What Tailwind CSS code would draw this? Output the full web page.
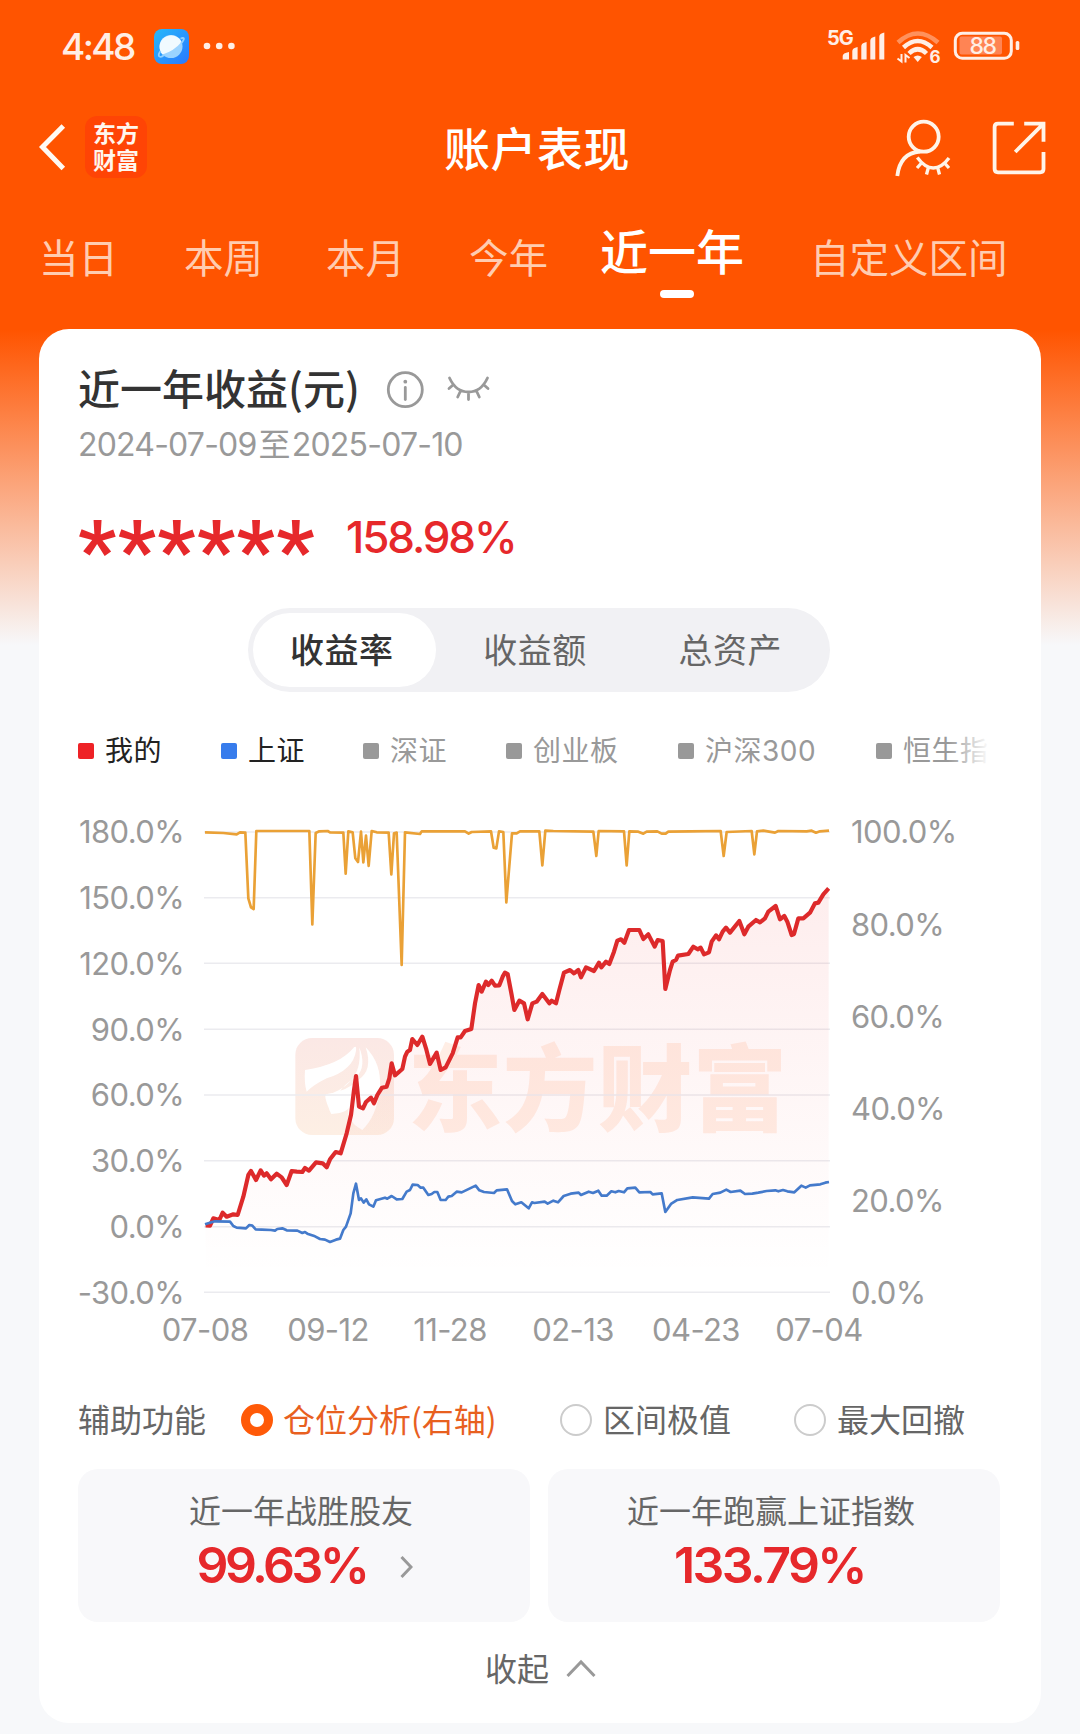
<!DOCTYPE html>
<html lang="zh-CN">
<head>
  <meta charset="UTF-8">
  <meta name="viewport" content="width=device-width, initial-scale=1.0">
  <title>账户表现</title>
  <script src="https://cdn.jsdelivr.net/npm/@tailwindcss/browser@4"></script>
</head>
<body class="w-[1080px] h-[1734px] overflow-hidden bg-[#f7f8fa] font-['Inter','Noto_Sans_CJK_SC',sans-serif] text-[#666]">
  <div class="h-[1734px] bg-linear-to-b/srgb from-[#ff5400] from-[330px] to-[#f7f8fa] to-[645px]">

    <!-- Barra de estado -->
    <div class="h-[92px] pl-[61px] pr-[60px] flex items-center justify-between text-[#ffeee6]">
      <div class="flex items-center">
        <span class="w-[93px] text-[37px] font-medium tracking-[-2.6px] leading-none">4:48</span>
        <svg class="w-[35px] h-[35px]" viewBox="0 0 35 35">
          <defs>
            <linearGradient id="sky" x1="0" y1="0" x2="1" y2="1"><stop offset="0" stop-color="#27b8fa"/><stop offset="1" stop-color="#2a78ff"/></linearGradient>
          </defs>
          <rect width="35" height="35" rx="8" fill="url(#sky)"/>
          <circle cx="17" cy="17.500" r="11.500" fill="#9bd3ff"/>
          <path d="M8.500 25.500A11.500 11.500 0 1 1 27.500 13Q20 22 8.500 25.500z" fill="#f1faff"/>
          <path d="M26.500 9.500q4.500-1.500 3 1.500-.5 1.500-2.500 3.500M6.500 22q-3 4.500-1 5.500t4.500-1.500" fill="none" stroke="#8fd0ff" stroke-width="1.800"/>
        </svg>
        <svg class="ml-[14px] w-[32px] h-[8px]" viewBox="0 0 32 8" fill="#ffeee6"><circle cx="4" cy="4" r="3.300"/><circle cx="16.200" cy="4" r="3.300"/><circle cx="28.400" cy="4" r="3.300"/></svg>
      </div>
      <svg class="w-[193px] h-[40px]" viewBox="827 26 193 40" fill="#ffeee6">
        <text x="827" y="44.500" class="text-[20px] font-bold tracking-[-1px]">5G</text>
        <path d="M842.700 59.500v-3.500q0-3 6.300-4v7.500zM852.300 59.500v-8.500q0-3 5.300-4v12.500zM861.300 59.500v-13.500q0-3 5.300-4v17.500zM870.300 59.500v-19q0-3 5-4v23zM879.300 59.500v-23q0-3 5-4v27z"/>
        <g fill="none" stroke="#ffeee6" stroke-width="4.500">
          <path d="M898 42.500Q917.700 24.500 938 42.500" stroke-opacity=".4"/>
          <path d="M903.500 47.500Q917.700 34.500 932 47.500"/>
          <path d="M909 53.500Q917.700 45 926.500 53.500"/>
        </g>
        <path d="M913.500 57q4.200-3 8.400 0l-4.200 5z"/>
        <path d="M897.500 58.500l4 3v-7.500M905.500 62.500V55l4 3" fill="none" stroke="#ffeee6" stroke-width="2"/>
        <text x="929.500" y="62.500" class="text-[17px] font-bold">6</text>
        <rect x="955.300" y="33.300" width="56" height="25" rx="7" fill="none" stroke="#ffeee6" stroke-width="3"/>
        <rect x="959.500" y="36.500" width="42.500" height="18" rx="2" fill="#ff8454"/>
        <text x="982.500" y="54.300" text-anchor="middle" class="text-[23px] font-medium tracking-[-1.5px]">88</text>
        <rect x="1015.700" y="41" width="3.600" height="9" rx="1.500"/>
      </svg>
    </div>

    <!-- Cabecera -->
    <header class="h-[112px] pl-[37px] pr-[34px] grid grid-cols-[1fr_auto_1fr] items-center text-white">
      <div class="flex items-center -mt-[2px]">
        <svg class="w-[30px] h-[52px]" viewBox="37 122 30 52" fill="none" stroke="#fffaf3" stroke-width="5"><path d="M63.300 127L42.500 148l20.800 21.500"/></svg>
        <div class="ml-[18px] size-[62px] rounded-xl bg-[#ff4405] flex flex-col items-center justify-center pb-[2px] text-[23px] leading-[27px] font-bold font-['Noto_Sans_CJK_SC',sans-serif] text-[#fff6ee]">
          <span>东方</span><span>财富</span>
        </div>
      </div>
      <h1 class="-mt-[4px] pr-[9px] text-[46px] leading-none tracking-[0.5px] font-medium font-['Noto_Sans_CJK_SC',sans-serif]">账户表现</h1>
      <svg class="justify-self-end w-[152px] h-[60px]" viewBox="894 118 152 60" fill="none" stroke="#fff4e8" stroke-width="3.800">
        <circle cx="923.700" cy="136.700" r="15"/>
        <path d="M897.300 176Q900 153 920 151.500"/>
        <path d="M917.300 157.500Q925 168 933.300 168T949 158M921.500 163l-4.500 5M928.500 167l-2 7.500M937.500 167l2 7.500M944.500 163l4.500 5" stroke-width="3.300"/>
        <path d="M1013.800 123.700H998q-3.400 0-3.400 3.400V169q0 3.300 3.400 3.300h42.100q3.400 0 3.400-3.300V152M1024.200 123.700h19.300v18M1043.500 123.700L1015.200 152"/>
      </svg>
    </header>

    <!-- Periodos -->
    <nav class="h-[125px] pl-[39px] flex items-start font-['Noto_Sans_CJK_SC',sans-serif] text-[39.5px] leading-[40px] text-[#ffccb0] whitespace-nowrap pt-[32px]">
      <a class="w-[145px]">当日</a>
      <a class="w-[142px]">本周</a>
      <a class="w-[143px]">本月</a>
      <a class="w-[131px]">今年</a>
      <a class="w-[210px] -mt-[11px] flex flex-col text-[48px] leading-[48px] font-medium text-white">近一年<span class="mt-[17px] ml-[60px] w-[34px] h-2 rounded-full bg-white"></span></a>
      <a>自定义区间</a>
    </nav>

    <main class="mx-[39px] h-[1394px] rounded-[30px] bg-white px-[39px] flex flex-col">

      <div class="mt-[34px] h-[48px] flex items-center">
        <h2 class="text-[42px] leading-[48px] font-medium text-[#333] font-['Noto_Sans_CJK_SC',sans-serif]">近一年收益(元)</h2>
        <svg class="ml-[26px] mt-[5px] w-[106px] h-[38px]" viewBox="386 371 106 38" fill="none" stroke="#999" stroke-width="2.800" stroke-linecap="round">
          <circle cx="405.300" cy="389.700" r="17"/>
          <path d="M405.300 387.500v12"/><circle cx="405.300" cy="381.700" r="1.900" fill="#999" stroke="none"/>
          <path d="M449.500 378Q456 392 468.500 392T487.500 378M453 385l-4 3.500M460.500 391l-2.800 6M468.500 392v7.500M476.500 391l2.800 6M484 385l4 3.500"/>
        </svg>
      </div>
      <div class="mt-[14px] h-[40px] flex items-center text-[32px] leading-none tracking-[-0.8px] text-[#999]">2024-07-09<span class="mx-[2px]">至</span>2025-07-10</div>

      <div class="mt-[47px] h-[50px] flex items-center text-[#e6282b]">
        <span class="w-[268px] h-[50px] font-['Roboto'] font-bold text-[84px] leading-[77px] tracking-[1.5px]">******</span>
        <span class="text-[44px] leading-none font-medium tracking-[-2.1px]">158.98%</span>
      </div>

      <div class="mt-[46px] ml-[170px] w-[582px] h-[84px] rounded-full bg-[#f1f1f4] p-[5px] flex gap-[8px] font-['Noto_Sans_CJK_SC',sans-serif] text-[34px] leading-none tracking-[0.5px]">
        <button class="w-[184px] pb-[2px] pr-[6px] rounded-full bg-white font-medium text-[#333]">收益率</button>
        <button class="w-[184px] pb-[2px] pr-[2px]">收益额</button>
        <button class="w-[190px] pb-[2px]">总资产</button>
      </div>

      <!-- Leyenda -->
      <div class="relative mt-[38px] h-[42px] w-[912px] overflow-hidden flex items-center text-[28px] leading-none tracking-[0.5px] text-[#999] whitespace-nowrap">
        <div class="w-[143px] shrink-0 flex items-center gap-[11px] text-[#222]"><i class="size-4 rounded-xs bg-[#ee2226]"></i>我的</div>
        <div class="w-[142px] shrink-0 flex items-center gap-[11px] text-[#222]"><i class="size-4 rounded-xs bg-[#377cec]"></i>上证</div>
        <div class="w-[143px] shrink-0 flex items-center gap-[11px]"><i class="size-4 rounded-xs bg-[#999]"></i>深证</div>
        <div class="w-[172px] shrink-0 flex items-center gap-[11px]"><i class="size-4 rounded-xs bg-[#999]"></i>创业板</div>
        <div class="w-[198px] shrink-0 flex items-center gap-[11px]"><i class="size-4 rounded-xs bg-[#999]"></i>沪深300</div>
        <div class="shrink-0 flex items-center gap-[11px]"><i class="size-4 rounded-xs bg-[#999]"></i>恒生指数</div>
        <div class="absolute right-0 inset-y-0 w-[42px] bg-linear-to-r from-white/0 to-white"></div>
      </div>

      <!-- Gráfico -->
      <svg class="mt-[33px] w-[924px] h-[545px] shrink-0 text-[31px] tracking-[-0.6px]" viewBox="0 0 924 545">
        <defs>
          <linearGradient id="area" gradientUnits="userSpaceOnUse" x1="0" y1="230" x2="0" y2="1400">
            <stop offset="0" stop-color="#f02020" stop-opacity=".08"/><stop offset="1" stop-color="#f02020" stop-opacity="0"/>
          </linearGradient>
          <linearGradient id="mark" x1="0" y1="0" x2="0" y2="1">
            <stop offset="0" stop-color="#fbe8e5"/><stop offset="1" stop-color="#fdefe4"/>
          </linearGradient>
        </defs>
        <g transform="translate(112 5) scale(.33333)">
          <rect x="316" y="684" width="296" height="291" rx="50" fill="url(#mark)"/>
          <path d="M345 780Q450 765 492 712Q500 705 498 722Q490 780 410 805Q370 825 350 845Q342 820 345 780zM508 712Q530 770 500 800Q430 840 424 912Q415 900 408 855Q450 845 480 815Q515 780 508 712zM527 712Q575 760 570 835Q560 920 517 960Q460 930 480 880Q480 910 424 912Q400 860 408 853Q470 845 505 810Q550 780 527 712z" fill="#fff"/>
          <text x="653" y="942" fill="#ff5400" fill-opacity=".1" class="text-[284px] font-black tracking-[1px] font-['Noto_Sans_CJK_SC',sans-serif]">东方财富</text>
        </g>
        <path d="M126 27H752M126 92.700H752M126 158.300H752M126 224.300H752M126 290H752M126 355.700H752M126 421.700H752M126 487.300H752" stroke="#ebebef" stroke-width="1.500"/>
        <g transform="translate(112 5) scale(.33333)" fill="none" stroke-linejoin="round">
          <path d="M47 1246L60 1247 70 1225 88 1230 98 1208 110 1220 130 1213 143 1215 160 1160 175 1095 183 1083 198 1110 212 1081 222 1097 230 1090 243 1108 260 1091 275 1102 290 1125 305 1083 320 1085 337 1086 345 1074 357 1082 378 1057 398 1060 410 1072 420 1048 437 1026 452 1030 470 970 483 915 492 840 498 798 507 890 519 895 528 876 543 863 552 880 562 855 576 833 590 830 598 805 605 760 615 796 637 777 645 740 652 725 660 720 667 687 682 705 697 680 708 715 720 762 740 728 752 780 767 772 788 730 803 682 812 682 825 663 844 657 855 580 866 525 875 545 888 515 895 525 905 512 915 527 928 526 938 500 945 488 953 492 965 555 973 600 988 572 1002 580 1013 628 1027 580 1040 575 1057 552 1078 580 1085 572 1098 580 1108 540 1122 488 1140 480 1152 490 1165 480 1173 502 1188 472 1212 483 1227 458 1234 472 1248 455 1258 462 1272 425 1282 392 1293 388 1303 398 1317 360 1348 360 1360 387 1375 373 1394 410 1403 390 1418 393 1426 537 1440 480 1448 455 1458 450 1464 437 1495 432 1510 410 1523 418 1532 413 1542 433 1557 427 1565 395 1578 376 1587 388 1598 365 1608 353 1620 368 1648 333 1663 373 1675 350 1698 330 1710 337 1725 325 1735 305 1757 288 1770 328 1783 318 1792 335 1805 375 1812 372 1825 325 1840 325 1860 308 1875 280 1885 278 1900 253 1916 235V1447H47z" fill="url(#area)"/>
          <path stroke="#eaa136" stroke-width="8" d="M45 67L100 69 140 73 150 67 166 68 175 265 183 292 191 297 199 63 358 63 367 343 377 69 388 64 413 63 420 67 460 68 467 191 475 64 488 67 496 145 504 156 513 65 520 157 528 77 536 168 545 63 560 67 596 68 604 193 612 70 620 68 635 465 645 67 690 72 695 64 825 64 836 71 845 66 903 64 911 113 919 115 927 64 940 66 949 277 966 70 980 70 990 64 1048 64 1057 166 1066 62 1090 63 1210 65 1219 138 1226 63 1302 64 1310 166 1318 64 1345 65 1360 71 1370 65 1402 64 1415 71 1427 71 1435 65 1500 64 1592 63 1601 138 1610 66 1685 63 1693 133 1701 64 1720 62 1755 68 1765 63 1850 64 1865 62 1878 68 1890 64 1917 62"/>
          <path stroke="#dd2a2b" stroke-width="12.500" d="M47 1246L60 1247 70 1225 88 1230 98 1208 110 1220 130 1213 143 1215 160 1160 175 1095 183 1083 198 1110 212 1081 222 1097 230 1090 243 1108 260 1091 275 1102 290 1125 305 1083 320 1085 337 1086 345 1074 357 1082 378 1057 398 1060 410 1072 420 1048 437 1026 452 1030 470 970 483 915 492 840 498 798 507 890 519 895 528 876 543 863 552 880 562 855 576 833 590 830 598 805 605 760 615 796 637 777 645 740 652 725 660 720 667 687 682 705 697 680 708 715 720 762 740 728 752 780 767 772 788 730 803 682 812 682 825 663 844 657 855 580 866 525 875 545 888 515 895 525 905 512 915 527 928 526 938 500 945 488 953 492 965 555 973 600 988 572 1002 580 1013 628 1027 580 1040 575 1057 552 1078 580 1085 572 1098 580 1108 540 1122 488 1140 480 1152 490 1165 480 1173 502 1188 472 1212 483 1227 458 1234 472 1248 455 1258 462 1272 425 1282 392 1293 388 1303 398 1317 360 1348 360 1360 387 1375 373 1394 410 1403 390 1418 393 1426 537 1440 480 1448 455 1458 450 1464 437 1495 432 1510 410 1523 418 1532 413 1542 433 1557 427 1565 395 1578 376 1587 388 1598 365 1608 353 1620 368 1648 333 1663 373 1675 350 1698 330 1710 337 1725 325 1735 305 1757 288 1770 328 1783 318 1792 335 1805 375 1812 372 1825 325 1840 325 1860 308 1875 280 1885 278 1900 253 1916 235"/>
          <path stroke="#447acb" stroke-width="8" d="M45 1243L60 1238 75 1234 120 1235 130 1248 140 1253 168 1255 178 1245 187 1247 197 1258 215 1259 243 1260 255 1262 262 1257 277 1255 290 1261 322 1262 337 1269 345 1266 352 1271 375 1279 390 1287 405 1289 420 1296 438 1289 450 1286 460 1260 468 1250 482 1210 490 1150 498 1121 507 1170 513 1165 521 1178 529 1168 537 1183 550 1190 558 1171 585 1163 592 1166 605 1158 620 1168 637 1167 650 1145 660 1140 668 1124 683 1125 692 1133 700 1133 715 1155 725 1152 733 1146 742 1146 752 1170 767 1170 775 1160 785 1158 800 1145 815 1147 857 1127 868 1141 882 1146 912 1149 920 1141 951 1138 966 1173 976 1183 994 1177 1016 1195 1026 1177 1033 1179 1064 1175 1073 1181 1090 1172 1104 1177 1121 1158 1142 1151 1166 1148 1173 1155 1196 1145 1209 1149 1225 1142 1235 1157 1250 1157 1264 1144 1276 1147 1286 1143 1302 1147 1312 1135 1336 1133 1348 1147 1381 1146 1388 1153 1415 1150 1426 1206 1443 1182 1462 1170 1508 1162 1557 1166 1568 1152 1591 1148 1609 1139 1622 1146 1651 1142 1665 1152 1687 1151 1705 1148 1730 1143 1756 1141 1765 1144 1779 1140 1792 1144 1813 1147 1834 1127 1847 1133 1860 1126 1891 1123 1906 1118 1917 1116"/>
        </g>
        <g fill="#999" text-anchor="end">
          <text x="106" y="38">180.0%</text><text x="106" y="104">150.0%</text><text x="106" y="169.500">120.0%</text><text x="106" y="235.500">90.0%</text>
          <text x="106" y="301">60.0%</text><text x="106" y="367">30.0%</text><text x="106" y="433">0.0%</text><text x="106" y="498.500">-30.0%</text>
        </g>
        <g fill="#999">
          <text x="773" y="38">100.0%</text><text x="773" y="130.500">80.0%</text><text x="773" y="222.500">60.0%</text>
          <text x="773" y="314.500">40.0%</text><text x="773" y="407">20.0%</text><text x="773" y="499">0.0%</text>
        </g>
        <g fill="#999" text-anchor="middle">
          <text x="127" y="536">07-08</text><text x="250" y="536">09-12</text><text x="372" y="536">11-28</text>
          <text x="495" y="536">02-13</text><text x="618" y="536">04-23</text><text x="741" y="536">07-04</text>
        </g>
      </svg>

      <!-- Funciones auxiliares -->
      <div class="mt-[50px] h-[40px] flex items-center text-[32px] leading-none font-['Noto_Sans_CJK_SC',sans-serif]">
        <span class="pb-[4px] w-[163px]">辅助功能</span>
        <i class="size-8 rounded-full border-[9px] border-[#ff5a08]"></i>
        <span class="pb-[4px] ml-[10px] w-[277px] text-[#e8601f]">仓位分析(右轴)</span>
        <i class="size-8 rounded-full border-2 border-[#ccc]"></i>
        <span class="pb-[4px] ml-[11px] w-[191px]">区间极值</span>
        <i class="size-8 rounded-full border-2 border-[#ccc]"></i>
        <span class="pb-[4px] ml-[11px]">最大回撤</span>
      </div>

      <div class="mt-[29px] w-[922px] grid grid-cols-2 gap-[18px] text-[32px] leading-none text-center">
        <div class="h-[153px] pt-[24px] pr-[6px] rounded-[20px] bg-[#f8f8fa]">
          <p class="font-['Noto_Sans_CJK_SC',sans-serif]">近一年战胜股友</p>
          <p class="mt-[15px] pl-[7px] flex items-center justify-center text-[50px] font-semibold tracking-[-3.5px] text-[#e6282b]">99.63%
            <svg class="ml-[33px] mt-[4px] w-[13px] h-[24px]" viewBox="0 0 13 24" fill="none" stroke="#999" stroke-width="3"><path d="M1.500 2L11 12 1.500 22"/></svg>
          </p>
        </div>
        <div class="h-[153px] pt-[24px] pr-[6px] rounded-[20px] bg-[#f8f8fa]">
          <p class="font-['Noto_Sans_CJK_SC',sans-serif]">近一年跑赢上证指数</p>
          <p class="mt-[15px] pr-[3px] text-[50px] font-semibold tracking-[-2.6px] text-[#e6282b]">133.79%</p>
        </div>
      </div>

      <div class="mt-[28px] h-[36px] pl-[1px] flex items-center justify-center text-[32px] leading-none font-['Noto_Sans_CJK_SC',sans-serif]"><span class="pb-[3px]">收起</span>
        <svg class="ml-[17px] w-[30px] h-[19px]" viewBox="0 0 30 19" fill="none" stroke="#999" stroke-width="3"><path d="M1.500 17L15 3l13.500 14"/></svg>
      </div>
    </main>
  </div>
</body>
</html>
